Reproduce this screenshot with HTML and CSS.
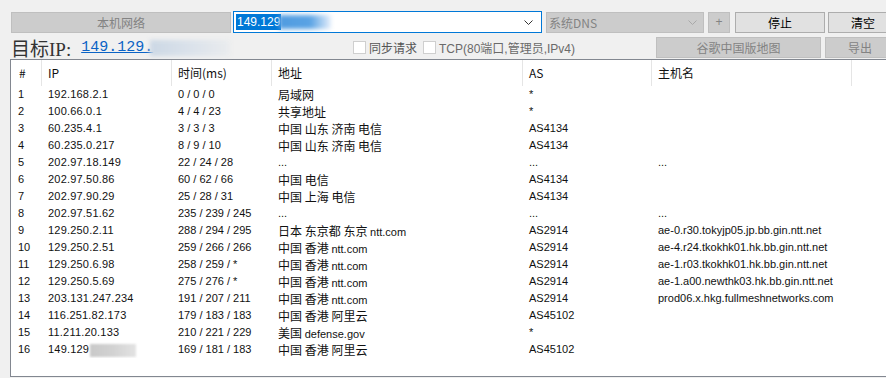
FILE: index.html
```html
<!DOCTYPE html>
<html>
<head>
  <title>路由追踪</title>
  <link rel="stylesheet" href="styles.css">
</head>
<body>
  <div class="toolbar">
    <button class="btn btn-local" disabled>本机网络</button>
    <div class="target-input">
      <span class="sel">149.129</span><span class="smudge smudge-blue"></span>
      <svg class="chev" width="9" height="6" viewBox="0 0 9 6"><path d="M0.5 0.5 L4.5 4.5 L8.5 0.5" fill="none" stroke="#333" stroke-width="1"/></svg>
    </div>
    <div class="dns-select">
      <span>系统DNS</span>
      <svg class="chev" width="9" height="6" viewBox="0 0 9 6"><path d="M0.5 0.5 L4.5 4.5 L8.5 0.5" fill="none" stroke="#a8a8a8" stroke-width="1"/></svg>
    </div>
    <button class="btn btn-plus" disabled>+</button>
    <button class="btn btn-stop">停止</button>
    <button class="btn btn-clear">清空</button>
  </div>

  <div class="toolbar second">
    <div class="target">
      <span class="target-label">目标IP:</span>
      <a class="target-link" href="#">149.129.</a><span class="smudge smudge-pale"></span>
    </div>
    <label class="check"><span class="box"></span><span class="dark">同步请求</span></label>
    <label class="check"><span class="box"></span><span>TCP(80端口,管理员,IPv4)</span></label>
    <button class="btn btn-map" disabled>谷歌中国版地图</button>
    <button class="btn btn-export" disabled>导出</button>
  </div>

  <div class="trace">
    <div class="row head">
      <div>#</div><div>IP</div><div>时间(ms)</div><div>地址</div><div>AS</div><div>主机名</div><div></div>
    </div>
    <div class="row"><div>1</div><div class="ip">192.168.2.1</div><div>0 / 0 / 0</div><div class="addr">局域网</div><div>*</div><div></div></div>
    <div class="row"><div>2</div><div class="ip">100.66.0.1</div><div>4 / 4 / 23</div><div class="addr">共享地址</div><div>*</div><div></div></div>
    <div class="row"><div>3</div><div class="ip">60.235.4.1</div><div>3 / 3 / 3</div><div class="addr">中国 山东 济南 电信</div><div>AS4134</div><div></div></div>
    <div class="row"><div>4</div><div class="ip">60.235.0.217</div><div>8 / 9 / 10</div><div class="addr">中国 山东 济南 电信</div><div>AS4134</div><div></div></div>
    <div class="row"><div>5</div><div class="ip">202.97.18.149</div><div>22 / 24 / 28</div><div>...</div><div>...</div><div>...</div></div>
    <div class="row"><div>6</div><div class="ip">202.97.50.86</div><div>60 / 62 / 66</div><div class="addr">中国 电信</div><div>AS4134</div><div></div></div>
    <div class="row"><div>7</div><div class="ip">202.97.90.29</div><div>25 / 28 / 31</div><div class="addr">中国 上海 电信</div><div>AS4134</div><div></div></div>
    <div class="row"><div>8</div><div class="ip">202.97.51.62</div><div>235 / 239 / 245</div><div>...</div><div>...</div><div>...</div></div>
    <div class="row"><div>9</div><div class="ip">129.250.2.11</div><div>288 / 294 / 295</div><div class="addr">日本 东京都 东京 <span class="en">ntt.com</span></div><div>AS2914</div><div>ae-0.r30.tokyjp05.jp.bb.gin.ntt.net</div></div>
    <div class="row"><div>10</div><div class="ip">129.250.2.51</div><div>259 / 266 / 266</div><div class="addr">中国 香港 <span class="en">ntt.com</span></div><div>AS2914</div><div>ae-4.r24.tkokhk01.hk.bb.gin.ntt.net</div></div>
    <div class="row"><div>11</div><div class="ip">129.250.6.98</div><div>258 / 259 / *</div><div class="addr">中国 香港 <span class="en">ntt.com</span></div><div>AS2914</div><div>ae-1.r03.tkokhk01.hk.bb.gin.ntt.net</div></div>
    <div class="row"><div>12</div><div class="ip">129.250.5.69</div><div>275 / 276 / *</div><div class="addr">中国 香港 <span class="en">ntt.com</span></div><div>AS2914</div><div>ae-1.a00.newthk03.hk.bb.gin.ntt.net</div></div>
    <div class="row"><div>13</div><div class="ip">203.131.247.234</div><div>191 / 207 / 211</div><div class="addr">中国 香港 <span class="en">ntt.com</span></div><div>AS2914</div><div>prod06.x.hkg.fullmeshnetworks.com</div></div>
    <div class="row"><div>14</div><div class="ip">116.251.82.173</div><div>179 / 183 / 183</div><div class="addr">中国 香港 阿里云</div><div>AS45102</div><div></div></div>
    <div class="row"><div>15</div><div class="ip">11.211.20.133</div><div>210 / 221 / 229</div><div class="addr">美国 <span class="en">defense.gov</span></div><div>*</div><div></div></div>
    <div class="row"><div>16</div><div class="ip">149.129<span class="smudge smudge-gray"></span></div><div>169 / 181 / 183</div><div class="addr">中国 香港 阿里云</div><div>AS45102</div><div></div></div>
  </div>
</body>
</html>
```

FILE: styles.css
```css
body {
  margin: 0;
  background: #f0f0f0;
  font-family: "Liberation Sans", "Noto Sans CJK SC", sans-serif;
  font-size: 12px;
  color: #000;
  overflow: hidden;
  width: 886px;
  height: 378px;
}

.toolbar {
  display: flex;
  align-items: center;
  padding: 11px 0 0 11px;
  height: 22px;
  white-space: nowrap;
}

.toolbar > * {
  flex-shrink: 0;
}

.toolbar.second {
  padding-top: 4px;
  height: 21px;
}

.btn {
  height: 21px;
  padding: 0;
  border: 1px solid #adadad;
  background: #e1e1e1;
  font-family: "Noto Sans CJK SC", sans-serif;
  font-size: 12px;
  color: #000;
  line-height: 19px;
}

.btn:disabled {
  background: #cccccc;
  border-color: #bfbfbf;
  color: #838383;
}

.btn-local { width: 220px; }
.btn-plus { width: 22px; margin-left: 4px; font-family: "Liberation Sans", sans-serif; }
.btn-stop { width: 90px; margin-left: 5px; }
.btn-clear { width: 70px; margin-left: 3px; }
.btn-map { width: 165px; margin-left: auto; }
.btn-export { width: 70px; margin-left: 4px; margin-right: -9px; }

.target-input {
  position: relative;
  width: 305px;
  height: 20px;
  margin-left: 2px;
  border: 1px solid #0078d7;
  background: #fff;
  display: flex;
  align-items: center;
  padding-left: 2px;
}

.target-input .sel {
  background: #0078d7;
  color: #fff;
  font-size: 12px;
  line-height: 16px;
  padding: 0 1px;
}

.chev {
  position: absolute;
  right: 8px;
  top: 8px;
}

.dns-select {
  position: relative;
  width: 154px;
  height: 19px;
  margin-left: 4px;
  border: 1px solid #bfbfbf;
  background: #cccccc;
  color: #838383;
  font-family: "Noto Sans CJK SC", sans-serif;
  line-height: 19px;
  padding-left: 2px;
}

.dns-select .chev { right: 6px; top: 7px; }

.smudge {
  display: inline-block;
  height: 14px;
  vertical-align: middle;
  filter: blur(2px);
}

.smudge-blue {
  width: 52px;
  background: linear-gradient(90deg, #4f9be0 0%, #5aa3e4 60%, #e6effb 100%);
  margin-left: -2px;
}

.smudge-pale {
  width: 80px;
  height: 16px;
  background: linear-gradient(90deg, #ccd8e5 0%, #dce3eb 55%, #eaecee 100%);
  margin-left: -3px;
}

.smudge-gray {
  width: 46px;
  height: 13px;
  background: linear-gradient(90deg, #c9c9c9 0%, #d2d2d2 50%, #e3e3e3 100%);
  margin-left: 1px;
  filter: blur(1px);
}

.target {
  display: flex;
  align-items: center;
  width: 336px;
}

.target-label {
  font-family: "Liberation Serif", "Noto Sans CJK SC", serif;
  font-size: 19px;
  color: #333;
}

.target-link {
  margin-left: 10px;
  font-family: "Liberation Mono", monospace;
  font-size: 15px;
  color: #0b63c5;
  text-decoration: underline;
}

.check {
  display: flex;
  align-items: center;
  margin-left: 6px;
  color: #6a6a6a;
  font-family: "Liberation Sans", "Noto Sans CJK SC", sans-serif;
}

.check .dark {
  color: #555;
  font-family: "Noto Sans CJK SC", sans-serif;
}

.check .box {
  width: 11px;
  height: 11px;
  border: 1px solid #cfcfcf;
  background: #fff;
  margin-right: 3px;
}

.trace {
  margin: 1px 0 0 10px;
  width: 890px;
  height: 316px;
  border: 1px solid #828790;
  border-right: none;
  background: #fff;
}

.row {
  display: grid;
  grid-template-columns: 30px 130px 100px 251px 129px 200px 1fr;
  height: 17px;
  line-height: 17px;
  font-size: 11px;
  color: #111;
}

.row > div {
  padding-left: 7px;
  white-space: nowrap;
  overflow: hidden;
}

.row .ip {
  letter-spacing: 0.2px;
}

.row .addr {
  font-family: "Noto Sans CJK SC", sans-serif;
  font-size: 12px;
}

.row .addr .en {
  font-family: "Liberation Sans", sans-serif;
  font-size: 11px;
}

.row.head {
  height: 26px;
  line-height: 26px;
  font-family: "Noto Sans CJK SC", sans-serif;
  font-size: 12px;
}

.row.head > div {
  padding-left: 6px;
  border-left: 1px solid #e5e5e5;
}

.row.head > div:first-child {
  border-left: none;
  padding-left: 8px;
}
```
